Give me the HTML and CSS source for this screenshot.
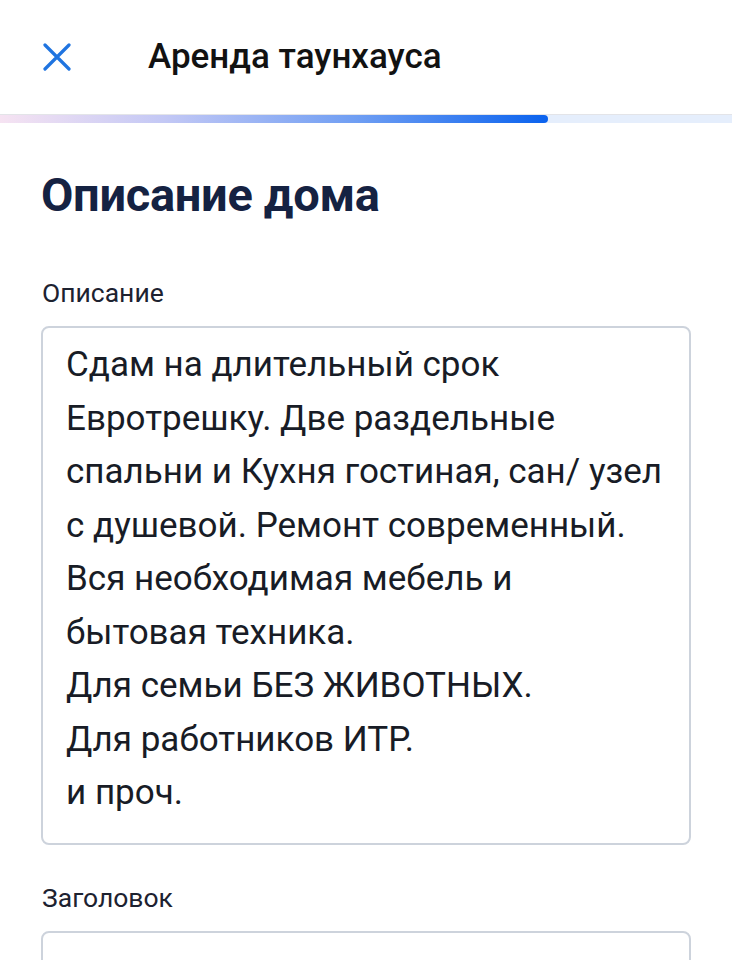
FILE: index.html
```html
<!DOCTYPE html>
<html lang="ru">
<head>
    <meta charset="UTF-8">
    <meta name="viewport" content="width=device-width, initial-scale=1.0">
    <title>Аренда таунхауса</title>
    <link rel="stylesheet" href="styles.css">
</head>
<body>
    <header class="topbar">
        <button type="button" class="close-btn" aria-label="Закрыть">
            <svg width="28" height="28" viewBox="0 0 28 28">
                <path d="M2 2 L26 26 M26 2 L2 26" stroke="#1f74e0" stroke-width="3.2" stroke-linecap="round" fill="none"/>
            </svg>
        </button>
        <h1 class="topbar-title">Аренда таунхауса</h1>
    </header>
    <div class="progress">
        <div class="progress-fill" style="width: 548px"></div>
    </div>

    <main class="form">
        <h2 class="form-title">Описание дома</h2>

        <div class="form-group">
            <label class="form-label">Описание</label>
            <div class="textarea">Сдам на длительный срок<br>Евротрешку. Две раздельные<br>спальни и Кухня гостиная, сан/ узел<br>с душевой. Ремонт современный.<br>Вся необходимая мебель и<br>бытовая техника.<br>Для семьи БЕЗ ЖИВОТНЫХ.<br>Для работников ИТР.<br>и проч.</div>
        </div>

        <div class="form-group form-group-title">
            <label class="form-label">Заголовок</label>
            <div class="input"></div>
        </div>
    </main>
</body>
</html>
```

FILE: styles.css
```css
body {
    margin: 0;
    background-color: #fff;
    font-family: Roboto, "Liberation Sans", sans-serif;
    color: #181c26;
    overflow: hidden;
}
.topbar {
    height: 114px;
    display: flex;
    align-items: center;
    border-bottom: 1px solid #e3e4e8;
}
.close-btn {
    width: 28px;
    height: 28px;
    margin-left: 43px;
    padding: 0;
    border: none;
    background: none;
    display: flex;
}
.topbar-title {
    margin: 0 0 0 77px;
    font-size: 35px;
    font-weight: 500;
    line-height: 40px;
    color: #121212;
}
.progress {
    height: 8px;
    background-color: #e5eefc;
}
.progress-fill {
    height: 100%;
    border-radius: 0 4px 4px 0;
    background: linear-gradient(90deg, #f6e3f2 0%, #c3c8f5 30%, #6f9ef3 65%, #0a62ee 100%);
}
.form {
    padding: 44px 41px 0;
}
.form-title {
    margin: 0;
    font-size: 47px;
    font-weight: 700;
    line-height: 56px;
    letter-spacing: -0.3px;
    color: #152242;
}
.form-group {
    margin-top: 54px;
}
.form-group-title {
    margin-top: 37px;
}
.form-label {
    display: block;
    margin-left: 1px;
    font-size: 26.5px;
    line-height: 32px;
    color: #1d2230;
}
.textarea,
.input {
    margin-top: 17px;
    box-sizing: border-box;
    border: 2px solid #cdd3dc;
    border-radius: 8px;
}
.textarea {
    height: 519px;
    padding: 10px 12px 0 23px;
    font-size: 35px;
    line-height: 53.5px;
}
.input {
    height: 80px;
}
```
